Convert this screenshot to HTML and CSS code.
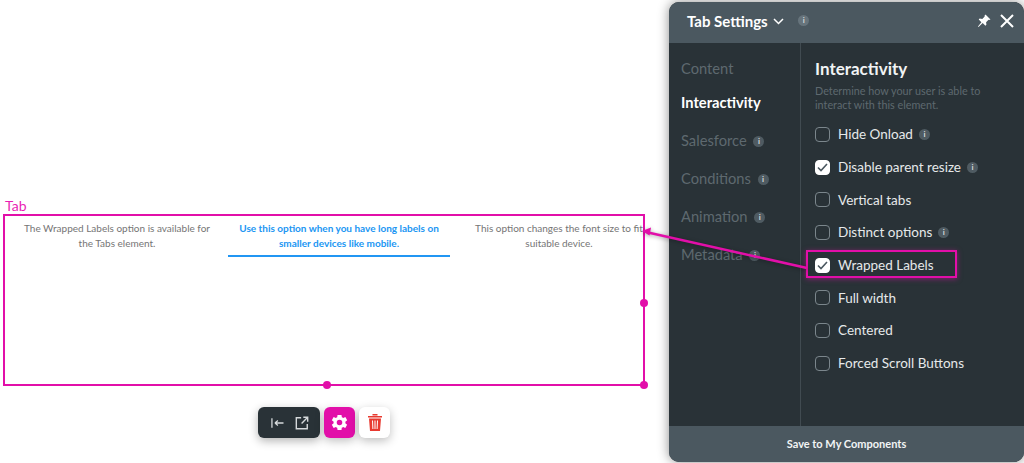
FILE: index.html
```html
<!DOCTYPE html>
<html lang="en">
<head>
<meta charset="UTF-8" />
<title>Tab Settings</title>
<link rel="stylesheet" href="styles.css">
</head>
<body>

<!-- Selected element on the canvas -->
<div class="element">
  <div class="element-label">Tab</div>
  <div class="element-box">
    <div class="tabs">
      <div class="tab">The Wrapped Labels option is available for the Tabs element.</div>
      <div class="tab active">Use this option when you have long labels on smaller devices like mobile.</div>
      <div class="tab last">This option changes the font size to fit<br>suitable device.</div>
    </div>
    <span class="handle handle-right"></span>
    <span class="handle handle-bottom"></span>
    <span class="handle handle-corner"></span>
  </div>
</div>

<!-- Toolbar under the element -->
<div class="toolbar">
  <div class="tool-group">
    <svg width="15" height="12" viewBox="0 0 16 14"><path d="M1.500 1.500v11M5 7h10M5 7l3.500-3M5 7l3.500 3" fill="none" stroke="#d5d9db" stroke-width="1.500"/></svg>
    <svg width="14" height="14" viewBox="0 0 16 16"><path d="M7 2H1.500v12.500H14V9M9.500 1.500h5v5M14.500 1.500L7.500 8.500" fill="none" stroke="#d5d9db" stroke-width="1.600"/></svg>
  </div>
  <div class="tool-btn tool-pink">
    <svg width="19" height="19" viewBox="0 0 24 24"><path fill="#fff" fill-rule="evenodd" d="M19.400 13a7.500 7.500 0 0 0 0-2l2.300-1.800-2.300-4-2.700 1.100a7.500 7.500 0 0 0-1.700-1L14.500 2.500h-5L9.100 5.300a7.500 7.500 0 0 0-1.700 1L4.600 5.200l-2.300 4L4.600 11a7.500 7.500 0 0 0 0 2l-2.300 1.800 2.300 4 2.800-1.100a7.500 7.500 0 0 0 1.700 1l.4 2.800h5l.4-2.800a7.500 7.500 0 0 0 1.700-1l2.700 1.100 2.300-4zM12 15.500a3.500 3.500 0 1 1 0-7 3.500 3.500 0 0 1 0 7z"/></svg>
  </div>
  <div class="tool-btn tool-white">
    <svg width="14" height="17" viewBox="0 0 14 17"><path fill="#e8392f" d="M0 2h14v1.500H0zM4.500 0h5v1.500h-5zM1 4.500h12L12 17H2zM4 6.500l.4 8.500h1L5 6.500zM6.500 6.500V15h1V6.500zM9 6.500L8.600 15h1l.4-8.500z"/></svg>
  </div>
</div>

<!-- Settings panel -->
<div class="panel">
  <div class="panel-header">
    <div class="panel-title">Tab Settings
      <svg width="11" height="7" viewBox="0 0 11 7"><path d="M1 1l4.500 4.500L10 1" fill="none" stroke="#fff" stroke-width="1.500"/></svg>
    </div>
    <span class="info info-head">i</span>
    <div class="panel-actions">
      <svg width="14" height="14" viewBox="0 0 14 14"><path fill="#fff" d="M8.500.5l5 5-1.300.6-.7-.3-2.400 2.400.3 2.600-1 1-2.700-2.700L1.500 13l-.5-.5 3.400-4.200L1.700 5.600l1-1 2.600.3L7.700 2.500l-.2-.7z"/></svg>
      <svg width="14" height="14" viewBox="0 0 14 14"><path d="M1 1l12 12M13 1L1 13" fill="none" stroke="#fff" stroke-width="2"/></svg>
    </div>
  </div>

  <div class="panel-body">
    <div class="side">
      <div class="side-item">Content</div>
      <div class="side-item selected">Interactivity</div>
      <div class="side-item">Salesforce <span class="info">i</span></div>
      <div class="side-item">Conditions <span class="info">i</span></div>
      <div class="side-item">Animation <span class="info">i</span></div>
      <div class="side-item">Metadata <span class="info">i</span></div>
    </div>

    <div class="options">
      <h2>Interactivity</h2>
      <p>Determine how your user is able to interact with this element.</p>
      <div class="option"><span class="check"></span>Hide Onload <span class="info">i</span></div>
      <div class="option"><span class="check on"><svg width="11" height="9" viewBox="0 0 11 9"><path d="M1 4.500l3 3L10 1" fill="none" stroke="#4b5860" stroke-width="1.600"/></svg></span>Disable parent resize <span class="info">i</span></div>
      <div class="option"><span class="check"></span>Vertical tabs</div>
      <div class="option"><span class="check"></span>Distinct options <span class="info">i</span></div>
      <div class="option"><span class="check on"><svg width="11" height="9" viewBox="0 0 11 9"><path d="M1 4.500l3 3L10 1" fill="none" stroke="#4b5860" stroke-width="1.600"/></svg></span>Wrapped Labels</div>
      <div class="option"><span class="check"></span>Full width</div>
      <div class="option"><span class="check"></span>Centered</div>
      <div class="option"><span class="check"></span>Forced Scroll Buttons</div>
    </div>
  </div>

  <div class="panel-footer">Save to My Components</div>
</div>

<!-- Annotation on top of everything -->
<div class="callout"></div>
<svg class="arrow" width="1024" height="463" viewBox="0 0 1024 463">
  <path d="M807 268L648 232.500" fill="none" stroke="#e20fa9" stroke-width="2.600"/>
  <path d="M642 231l9-3.500-1.500 8z" fill="#e20fa9"/>
</svg>

</body>
</html>
```

FILE: styles.css
```css
* {
  box-sizing: border-box;
}
html, body {
  height: 100%;
}
body {
  margin: 0;
  background-color: #fff;
  font-family: "Lato", Arial, sans-serif;
  overflow: hidden;
  position: relative;
}

/* canvas element */
.element {
  position: absolute;
  left: 3px;
  top: 197px;
  width: 642px;
}
.element-label {
  padding-left: 2px;
  height: 17px;
  font-size: 14px;
  line-height: 17px;
  color: #e91eb4;
}
.element-box {
  position: relative;
  height: 172px;
  border: 2px solid #e20fa9;
}
.tabs {
  display: flex;
  width: 666px;
  margin-left: 1px;
}
.tab {
  width: 222px;
  height: 41px;
  padding: 5px 14px 0;
  font-size: 10px;
  line-height: 15px;
  color: #757575;
  text-align: center;
}
.tab.active {
  padding: 5px 8px 0;
  color: #2196f3;
  font-weight: 700;
  border-bottom: 2px solid #2196f3;
}
.tab.last {
  padding: 5px 0 0;
  width: 218px;
  white-space: nowrap;
}
.handle {
  position: absolute;
  width: 8px;
  height: 8px;
  border-radius: 50%;
  background-color: #e20fa9;
}
.handle-right {
  right: -5px;
  top: 83px;
}
.handle-bottom {
  left: 318px;
  bottom: -5px;
}
.handle-corner {
  right: -5px;
  bottom: -5px;
}

/* toolbar */
.toolbar {
  position: absolute;
  left: 258px;
  top: 407px;
  display: flex;
  gap: 4px;
}
.tool-group {
  display: flex;
  align-items: center;
  justify-content: space-between;
  width: 62px;
  height: 31px;
  padding: 0 11px 0 12px;
  background-color: #293237;
  border-radius: 6px;
  box-shadow: 0 3px 10px rgba(0, 0, 0, 0.3);
}
.tool-btn {
  display: flex;
  align-items: center;
  justify-content: center;
  width: 31px;
  height: 31px;
  border-radius: 6px;
  box-shadow: 0 3px 10px rgba(0, 0, 0, 0.25);
}
.tool-pink {
  background-color: #e20fa9;
}
.tool-white {
  background-color: #fff;
}

/* settings panel */
.panel {
  position: absolute;
  left: 669px;
  top: 2px;
  width: 355px;
  height: 460px;
  display: flex;
  flex-direction: column;
  background-color: #293237;
  border-radius: 10px;
  overflow: hidden;
  box-shadow: 0 0 12px rgba(0, 0, 0, 0.45);
}
.panel-header {
  display: flex;
  align-items: center;
  height: 41px;
  padding: 0 10px 4px 18px;
  background-color: #4b5860;
}
.panel-title {
  font-size: 15px;
  font-weight: 700;
  color: #fff;
}
.panel-title svg {
  margin-left: 2px;
  vertical-align: 2px;
}
.panel-actions {
  display: flex;
  align-items: center;
  gap: 9px;
  margin-left: auto;
}
.info {
  display: inline-block;
  width: 11px;
  height: 11px;
  margin-left: 3px;
  border-radius: 50%;
  background-color: #4f5b62;
  color: #d5d9db;
  font-size: 8px;
  font-weight: 700;
  line-height: 11px;
  text-align: center;
  vertical-align: 2px;
}
.info-head {
  margin-left: 14px;
  background-color: #67747c;
}
.panel-body {
  flex: 1;
  display: flex;
  min-height: 0;
}
.side {
  width: 132px;
  padding-top: 16px;
  border-right: 1px solid #414b51;
}
.side-item {
  height: 38px;
  padding-left: 12px;
  font-size: 14.700px;
  line-height: 18px;
  color: #5e696f;
}
.side-item:first-child {
  height: 34px;
}
.side-item.selected {
  color: #fff;
  font-weight: 700;
}
.options {
  flex: 1;
  padding: 16px 0 0 14px;
}
.options h2 {
  margin: 0;
  font-size: 17px;
  line-height: 20px;
  font-weight: 700;
  color: #f2f4f5;
}
.options p {
  width: 190px;
  margin: 5px 0 7px;
  font-size: 10.800px;
  line-height: 13.500px;
  color: #5e696f;
}
.option {
  display: flex;
  align-items: center;
  height: 32.700px;
  font-size: 13.500px;
  color: #e6e9ea;
}
.option .info {
  margin-left: 6px;
  vertical-align: 0;
}
.check {
  display: flex;
  align-items: center;
  justify-content: center;
  width: 15px;
  height: 15px;
  margin-right: 8px;
  border: 1.500px solid #7b868c;
  border-radius: 4px;
}
.check.on {
  background-color: #fff;
  border-color: #fff;
}
.panel-footer {
  height: 36px;
  background-color: #4b5860;
  color: #f2f4f5;
  font-size: 11px;
  font-weight: 700;
  line-height: 36px;
  text-align: center;
}

/* annotation */
.callout {
  position: absolute;
  left: 806px;
  top: 250px;
  width: 151px;
  height: 28px;
  border: 2px solid #e20fa9;
  box-shadow: 0 1px 5px rgba(226, 15, 169, 0.5);
}
.arrow {
  position: absolute;
  left: 0;
  top: 0;
  pointer-events: none;
  filter: drop-shadow(0 1px 2px rgba(0, 0, 0, 0.35));
}
```
